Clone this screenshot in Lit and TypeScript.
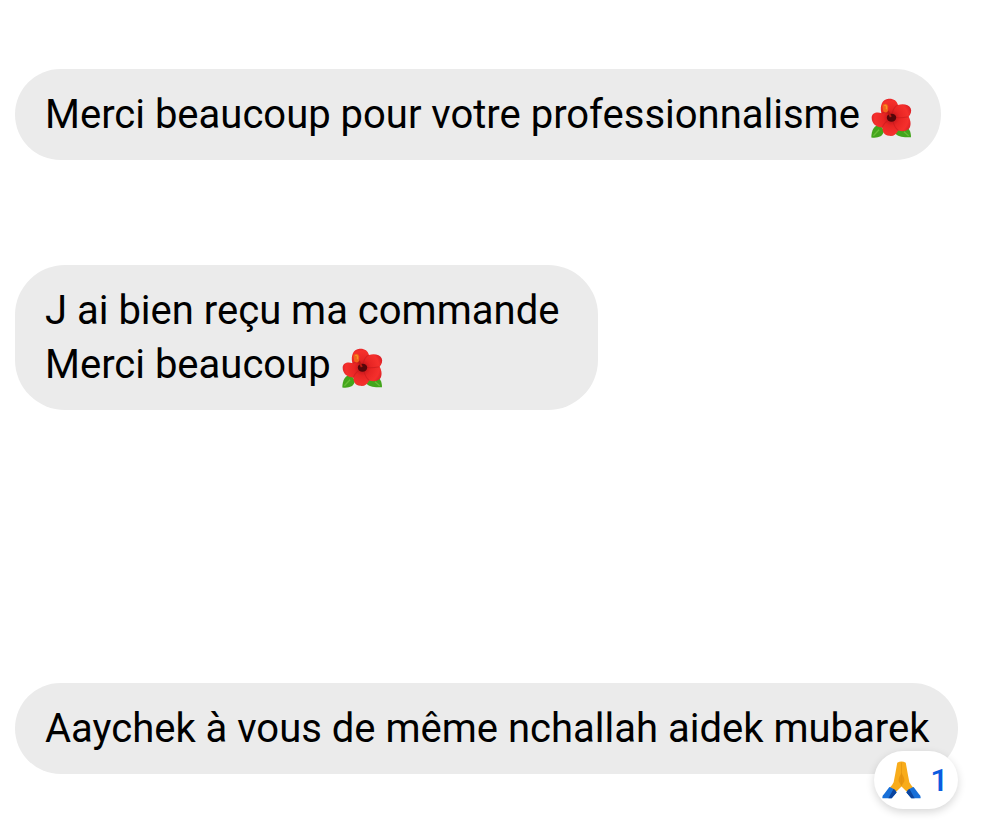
import { LitElement, html, css } from "lit";
import { customElement } from "lit/decorators.js";

const hibiscus = html`<svg class="flower" viewBox="0 0 122 118" role="img" aria-label="hibiscus">
  <defs>
    <radialGradient id="petal" gradientUnits="userSpaceOnUse" cx="61" cy="58" r="62">
      <stop offset="0" stop-color="#b31118" />
      <stop offset=".4" stop-color="#e82524" />
      <stop offset=".8" stop-color="#f5302c" />
      <stop offset="1" stop-color="#dc2027" />
    </radialGradient>
  </defs>
  <path d="M26 78C10 80 1 94 1 117c18 2 34-1 38-20z" fill="#43a51c" />
  <path d="M98 80c14 7 21 18 21 36-21 2-40-1-48-12z" fill="#43a51c" />
  <path d="M7 112l17-18M112 112L98 100" stroke="#66bd35" stroke-width="4" fill="none" />
  <path d="M31 45C25 21 35 3 52 2c15-1 25 6 28 18 16-5 33-1 38 10 4 9 0 18-6 25 7 12 8 27 1 36-7 8-20 9-32 5-5 12-15 18-27 16-14-2-20-11-20-25C15 87 2 74 2 58c0-13 15-19 29-13z" fill="url(#petal)" />
  <path d="M58 53C47 38 35 43 31 45M63 50c1-14 6-24 17-30M68 57c15 2 30 1 44-2M65 65c2 15 8 25 16 31M54 64C44 70 36 79 33 89" stroke="#bd171c" stroke-width="3" opacity=".5" fill="none" />
  <ellipse cx="61" cy="58" rx="14" ry="12" fill="#54070a" />
  <path d="M59 56L50 38" stroke="#b91a12" stroke-width="6" />
  <path d="M34 23c3-9 15-8 17 1v13c-2 8-14 7-15 0z" fill="#f0641b" />
  <path d="M40 23c2-3 5-2 6 2v8" stroke="#fb8f26" stroke-width="4" fill="none" />
</svg>`;

const hands = html`<svg class="hands" viewBox="0 0 118 116" role="img" aria-label="folded hands">
  <path d="M46 5q13-7 26 0l6 34 5 26q5 9 12 17L79 98 59 78 39 98 23 82q8-8 12-17l5-26z" fill="#f8ac1b" />
  <path d="M59 36c-4 8-9 14-9 25l9 16 9-16c0-11-5-17-9-25z" fill="#e9960f" />
  <path d="M59 5v70" stroke="#e0940f" stroke-width="2" fill="none" />
  <path d="M22 79q14 3 22 17L29 114H1q-2-7 5-13z" fill="#176fd8" />
  <path d="M96 79q-14 3-22 17l15 18h28q2-7-5-13z" fill="#176fd8" />
  <path d="M35 85q6 4 9 11L29 114H19zM83 85q-6 4-9 11l15 18h10z" fill="#0b459e" />
</svg>`;

@customElement("app-root")
class AppRoot extends LitElement {
  static styles = css`
    :host {
      display: block;
      min-height: 100vh;
      box-sizing: border-box;
      background: #fff;
      color: #000;
      font-family: Roboto, "Liberation Sans", sans-serif;
    }
    .thread {
      display: flex;
      flex-direction: column;
      align-items: flex-start;
      padding: 69px 15px 24px;
    }
    .bubble {
      position: relative;
      padding: 19px 29px 18px 30px;
      border-radius: 50px;
      background: #ebebeb;
      font-size: 40px;
      line-height: 54px;
    }
    p {
      margin: 0;
      white-space: pre;
    }
    .later {
      margin-top: 105px;
    }
    .latest {
      margin-top: 273px;
    }
    .flower {
      width: 41px;
      height: 40px;
      margin-left: 1px;
      vertical-align: -10px;
    }
    .reaction {
      position: absolute;
      right: 0;
      bottom: -35px;
      display: flex;
      align-items: center;
      justify-content: space-between;
      width: 84px;
      height: 58px;
      box-sizing: border-box;
      padding: 0 10px 0 8px;
      border: 0;
      border-radius: 29px;
      background: #fff;
      box-shadow: 0 3px 8px rgba(0, 0, 0, 0.16);
      color: #0b5be0;
      font: 500 32px/36px Roboto, sans-serif;
    }
    .hands {
      width: 39px;
      height: 38px;
    }
  `;

  render() {
    return html`<main class="thread">
      <div class="bubble"><p>Merci beaucoup pour votre professionnalisme ${hibiscus}</p></div>
      <div class="bubble later"><p>J ai bien reçu ma commande </p><p>Merci beaucoup ${hibiscus}</p></div>
      <div class="bubble latest">
        <p>Aaychek à vous de même nchallah aidek mubarek</p>
        <button class="reaction" type="button">${hands}<span>1</span></button>
      </div>
    </main>`;
  }
}
